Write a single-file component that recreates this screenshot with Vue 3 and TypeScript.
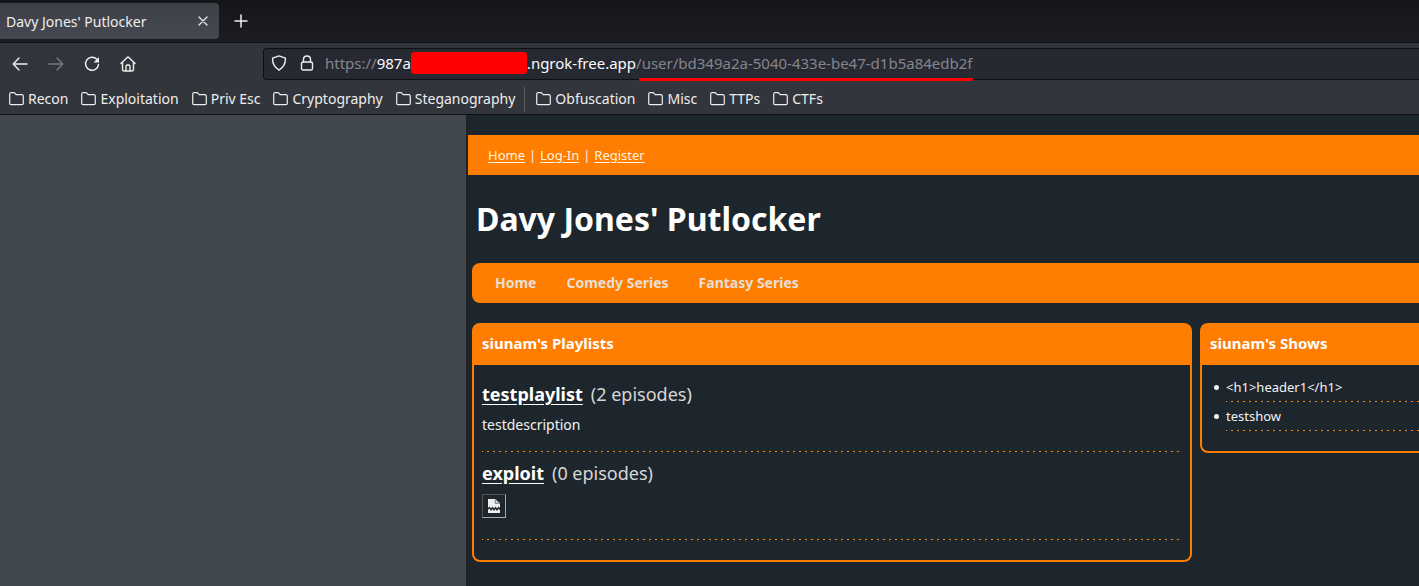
<script setup lang="ts">
import { ref } from 'vue'

interface Playlist {
  name: string
  episodes: number
  description?: string
}

const path = ref('/user/bd349a2a-5040-433e-be47-d1b5a84edb2f')
const bookmarks: string[] = ['Recon', 'Exploitation', 'Priv Esc', 'Cryptography', 'Steganography']
const moreBookmarks: string[] = ['Obfuscation', 'Misc', 'TTPs', 'CTFs']
const series: string[] = ['Home', 'Comedy Series', 'Fantasy Series']
const playlists: Playlist[] = [
  { name: 'testplaylist', episodes: 2, description: 'testdescription' },
  { name: 'exploit', episodes: 0 },
]
const shows: string[] = ['<h1>header1</h1>', 'testshow']
</script>

<template>
  <div class="window">
    <header class="chrome">
      <div class="tabs">
        <div class="tab">
          <span class="tab-title">Davy Jones' Putlocker</span>
          <button class="icon-btn" type="button" aria-label="Close tab">
            <svg width="10" height="10" viewBox="0 0 10 10"><path d="M1 1l8 8M9 1L1 9" /></svg>
          </button>
        </div>
        <button class="icon-btn new-tab" type="button" aria-label="New tab">
          <svg width="14" height="14" viewBox="0 0 14 14"><path d="M7 1v12M1 7h12" stroke-width="1.5" /></svg>
        </button>
      </div>

      <div class="toolbar">
        <div class="nav-buttons">
          <button class="icon-btn" type="button" aria-label="Back">
            <svg width="16" height="16" viewBox="0 0 16 16"><path d="M15 8H1.5M7 2L1.2 8L7 14" stroke-width="1.4" /></svg>
          </button>
          <button class="icon-btn dim" type="button" aria-label="Forward">
            <svg width="16" height="16" viewBox="0 0 16 16"><path d="M1 8h13.5M9 2l5.8 6L9 14" stroke-width="1.4" /></svg>
          </button>
          <button class="icon-btn" type="button" aria-label="Reload">
            <svg width="16" height="16" viewBox="0 0 16 16">
              <path d="M12.8 3.3A6.5 6.5 0 1 0 14.5 8.6" stroke-width="1.5" />
              <path class="solid" d="M15 1v5.4H9.6z" />
            </svg>
          </button>
          <button class="icon-btn" type="button" aria-label="Home page">
            <svg width="16" height="16" viewBox="0 0 16 16">
              <path d="M1 7.6L7.2 1.4Q8 .7 8.8 1.4L15 7.6M2.5 6.5V13.6Q2.5 15 3.9 15H12.1Q13.5 15 13.5 13.6V6.5M6 15V10.6Q6 9 7.3 9H8.7Q10 9 10 10.6V15" stroke-width="1.4" />
            </svg>
          </button>
        </div>

        <div class="address">
          <svg width="16" height="16" viewBox="0 0 16 16">
            <path d="M8 .9L14.4 3.2Q14.8 10.8 8 15.2Q1.2 10.8 1.6 3.2Z" stroke-width="1.4" />
          </svg>
          <svg class="lock" width="14" height="16" viewBox="0 0 14 16">
            <rect x="1.5" y="7" width="11" height="8" rx="1.6" stroke-width="1.4" />
            <path d="M3.5 7V4.2Q3.5 1 7 1Q10.5 1 10.5 4.2V7" stroke-width="1.4" />
          </svg>
          <label class="url" for="url-path">
            <span class="faint">https://</span><span>987a</span><span class="redacted"></span><span>.ngrok-free.app</span>
          </label>
          <span class="path">
            <input id="url-path" v-model="path" type="text" spellcheck="false" />
          </span>
        </div>
      </div>

      <nav class="bookmarks" aria-label="Bookmarks">
        <button v-for="name in bookmarks" :key="name" class="bookmark" type="button">
          <svg width="15" height="14" viewBox="0 0 15 14"><path d="M.7 11.3V2.2Q.7 .7 2.2 .7H4.8Q5.5 .7 6 1.4L7.2 2.7H12.8Q14.3 2.7 14.3 4.2V11.3Q14.3 12.6 13 12.6H2Q.7 12.6 .7 11.3Z" /></svg>
          <span>{{ name }}</span>
        </button>
        <span class="divider"></span>
        <button v-for="name in moreBookmarks" :key="name" class="bookmark" type="button">
          <svg width="15" height="14" viewBox="0 0 15 14"><path d="M.7 11.3V2.2Q.7 .7 2.2 .7H4.8Q5.5 .7 6 1.4L7.2 2.7H12.8Q14.3 2.7 14.3 4.2V11.3Q14.3 12.6 13 12.6H2Q.7 12.6 .7 11.3Z" /></svg>
          <span>{{ name }}</span>
        </button>
      </nav>
    </header>

    <div class="page">
      <main class="site">
        <nav class="account" aria-label="Account">
          <a href="#">Home</a><span class="bar">|</span><a href="#">Log-In</a><span class="bar">|</span><a href="#">Register</a>
        </nav>
        <h1>Davy Jones' Putlocker</h1>
        <nav class="series" aria-label="Series">
          <a v-for="item in series" :key="item" href="#">{{ item }}</a>
        </nav>
        <div class="columns">
          <section class="panel">
            <h2>siunam's Playlists</h2>
            <div class="playlists">
              <article v-for="list in playlists" :key="list.name" class="playlist">
                <h3>
                  <a href="#">{{ list.name }}</a><span class="count">({{ list.episodes }} episodes)</span>
                </h3>
                <p v-if="list.description">{{ list.description }}</p>
                <span v-else class="broken" role="img" aria-label="Missing image">
                  <svg width="12" height="14" viewBox="0 0 12 14">
                    <path class="paper" d="M0 0H7V4.5H12V9L10.5 7.5L9 9.5L7.5 7.5L6 9.5L4.5 7.5L3 9.5L1.5 7.5L0 9Z" />
                    <path class="fold" d="M7.5 .5L11.5 4H7.5Z" />
                    <path class="paper" d="M0 10.5L1.5 9.8L3 12L4.5 10L6 12L7.5 10L9 12L10.5 10L12 11V14H0Z" />
                  </svg>
                </span>
              </article>
            </div>
          </section>
          <section class="panel shows">
            <h2>siunam's Shows</h2>
            <ul>
              <li v-for="show in shows" :key="show">{{ show }}</li>
            </ul>
          </section>
        </div>
      </main>
    </div>
  </div>
</template>

<style>
body {
  margin: 0;
  background: #1e262d;
}
</style>

<style scoped>
* {
  box-sizing: border-box;
}

.window {
  display: flex;
  flex-direction: column;
  min-height: 100vh;
  overflow: hidden;
  font-family: "Noto Sans", "Open Sans", sans-serif;
  color: #f2f2f2;
}

button {
  padding: 0;
  border: 0;
  background: none;
  color: inherit;
  font: inherit;
}

svg {
  display: block;
  flex: none;
  fill: none;
  stroke: currentColor;
  stroke-width: 1.2;
  stroke-linecap: round;
  stroke-linejoin: round;
}

.solid {
  fill: currentColor;
  stroke: none;
}

.chrome {
  background: #33353d;
  border-bottom: 1px solid #101114;
  color: #eeeeec;
  font-size: 14px;
  line-height: 20px;
}

.tabs {
  display: flex;
  align-items: center;
  height: 43px;
  background: linear-gradient(#15161a, #1c1d23);
  border-bottom: 1px solid #111216;
}

.tab {
  display: flex;
  align-items: center;
  justify-content: space-between;
  width: 219px;
  height: 36px;
  padding: 0 11px 0 6px;
  border-radius: 0 4px 4px 0;
  background: linear-gradient(#3e4048, #454851);
}

.tab-title {
  padding-top: 2px;
}

.icon-btn {
  display: grid;
  place-items: center;
}

.new-tab {
  margin-left: 15px;
}

.toolbar {
  display: flex;
  align-items: center;
  height: 41px;
}

.nav-buttons {
  display: flex;
  flex: 0 0 263px;
  gap: 20px;
  padding-left: 12px;
}

.dim {
  color: #777980;
}

.address {
  display: flex;
  flex: 1;
  align-items: center;
  height: 32px;
  padding: 0 0 2px 7px;
  border: 1px solid #0f1014;
  border-right: 0;
  border-radius: 4px 0 0 4px;
  background: #272932;
  font-size: 15px;
}

.lock {
  margin: 0 11px 0 13px;
}

.url {
  display: flex;
  align-items: center;
  color: #fbfbfe;
}

.faint {
  color: #84858c;
}

.redacted {
  width: 116px;
  height: 22px;
  border-radius: 3px;
  background: #ff0000;
}

.path {
  position: relative;
  width: 337px;
}

.path::after {
  content: "";
  position: absolute;
  left: 3px;
  right: 0;
  top: 25px;
  height: 3px;
  border-radius: 1px;
  background: #ff0000;
}

.path input {
  display: block;
  width: 100%;
  padding: 0;
  border: 0;
  outline: 0;
  background: none;
  color: #84858c;
  font: inherit;
}

.bookmarks {
  display: flex;
  align-items: center;
  gap: 13px;
  height: 30px;
  padding-left: 9px;
}

.bookmark {
  display: flex;
  align-items: center;
  gap: 4px;
  white-space: nowrap;
}

.divider {
  width: 1px;
  height: 25px;
  margin: 0 -2px 0 -4px;
  background: #5b5d65;
}

.page {
  flex: 1;
  display: flex;
  padding-left: 466px;
  background: #40474e;
}

.site {
  flex: 1;
  min-width: 0;
  padding-top: 20px;
  border-left: 2px solid #222222;
  background: #1e262d;
}

.account {
  display: flex;
  align-items: center;
  height: 40px;
  padding-left: 20px;
  background: #ff7d00;
  font-size: 13px;
  line-height: 20px;
}

.account a {
  color: #fff3df;
  text-underline-offset: 2px;
}

.bar {
  width: 15px;
  text-align: center;
}

h1 {
  margin: 0;
  padding: 20px 8px;
  color: #ffffff;
  font-size: 32px;
  line-height: 48px;
}

.series {
  display: flex;
  align-items: center;
  gap: 30px;
  height: 40px;
  margin-left: 4px;
  padding: 0 0 2px 23px;
  border-radius: 8px 0 0 8px;
  background: #ff7d00;
  font-size: 14px;
  font-weight: 700;
}

.series a {
  color: #eadfd5;
  text-decoration: none;
}

.columns {
  display: grid;
  grid-template-columns: 720px minmax(0, 1fr);
  gap: 8px;
  align-items: start;
  margin: 20px 0 0 4px;
}

.panel {
  border: 2px solid #ff7d00;
  border-radius: 8px;
}

.shows {
  border-right: 0;
  border-radius: 8px 0 0 8px;
}

h2 {
  margin: 0;
  padding: 6px 8px 10px;
  background: #ff7d00;
  color: #ffffff;
  font-size: 15px;
  line-height: 24px;
}

.playlists {
  padding: 16px 8px 20px;
}

.playlist,
li {
  background: repeating-linear-gradient(90deg, #ff7d00 0 1px, transparent 1px 5px, #ff7d00 5px 6px) left bottom / 100% 1px no-repeat;
}

.playlist {
  height: 71px;
}

.playlist + .playlist {
  height: 88px;
  padding-top: 8px;
}

h3 {
  margin: 0;
  font-size: 18px;
  line-height: 26px;
}

h3 a {
  color: #ffffff;
  text-underline-offset: 3px;
}

.count {
  margin-left: 8px;
  color: #d7d7d7;
  font-weight: 400;
}

p {
  margin: 8px 0 0;
  font-size: 14px;
  line-height: 20px;
}

.broken {
  display: grid;
  place-items: center;
  width: 24px;
  height: 24px;
  margin-top: 8px;
  border: 1px solid;
  border-color: #555555 #aaaaaa #aaaaaa #555555;
}

.paper {
  fill: #eeeeee;
  stroke: none;
}

.fold {
  fill: #eeeeee;
  stroke: #999999;
  stroke-width: 1;
}

ul {
  margin: 0;
  padding: 8px 0 20px 24px;
  list-style: none;
}

li {
  position: relative;
  height: 29px;
  padding-top: 4px;
  font-size: 13px;
  line-height: 20px;
}

li::before {
  content: "";
  position: absolute;
  left: -12px;
  top: 12px;
  width: 5px;
  height: 5px;
  border-radius: 50%;
  background: #f2f2f2;
}
</style>
